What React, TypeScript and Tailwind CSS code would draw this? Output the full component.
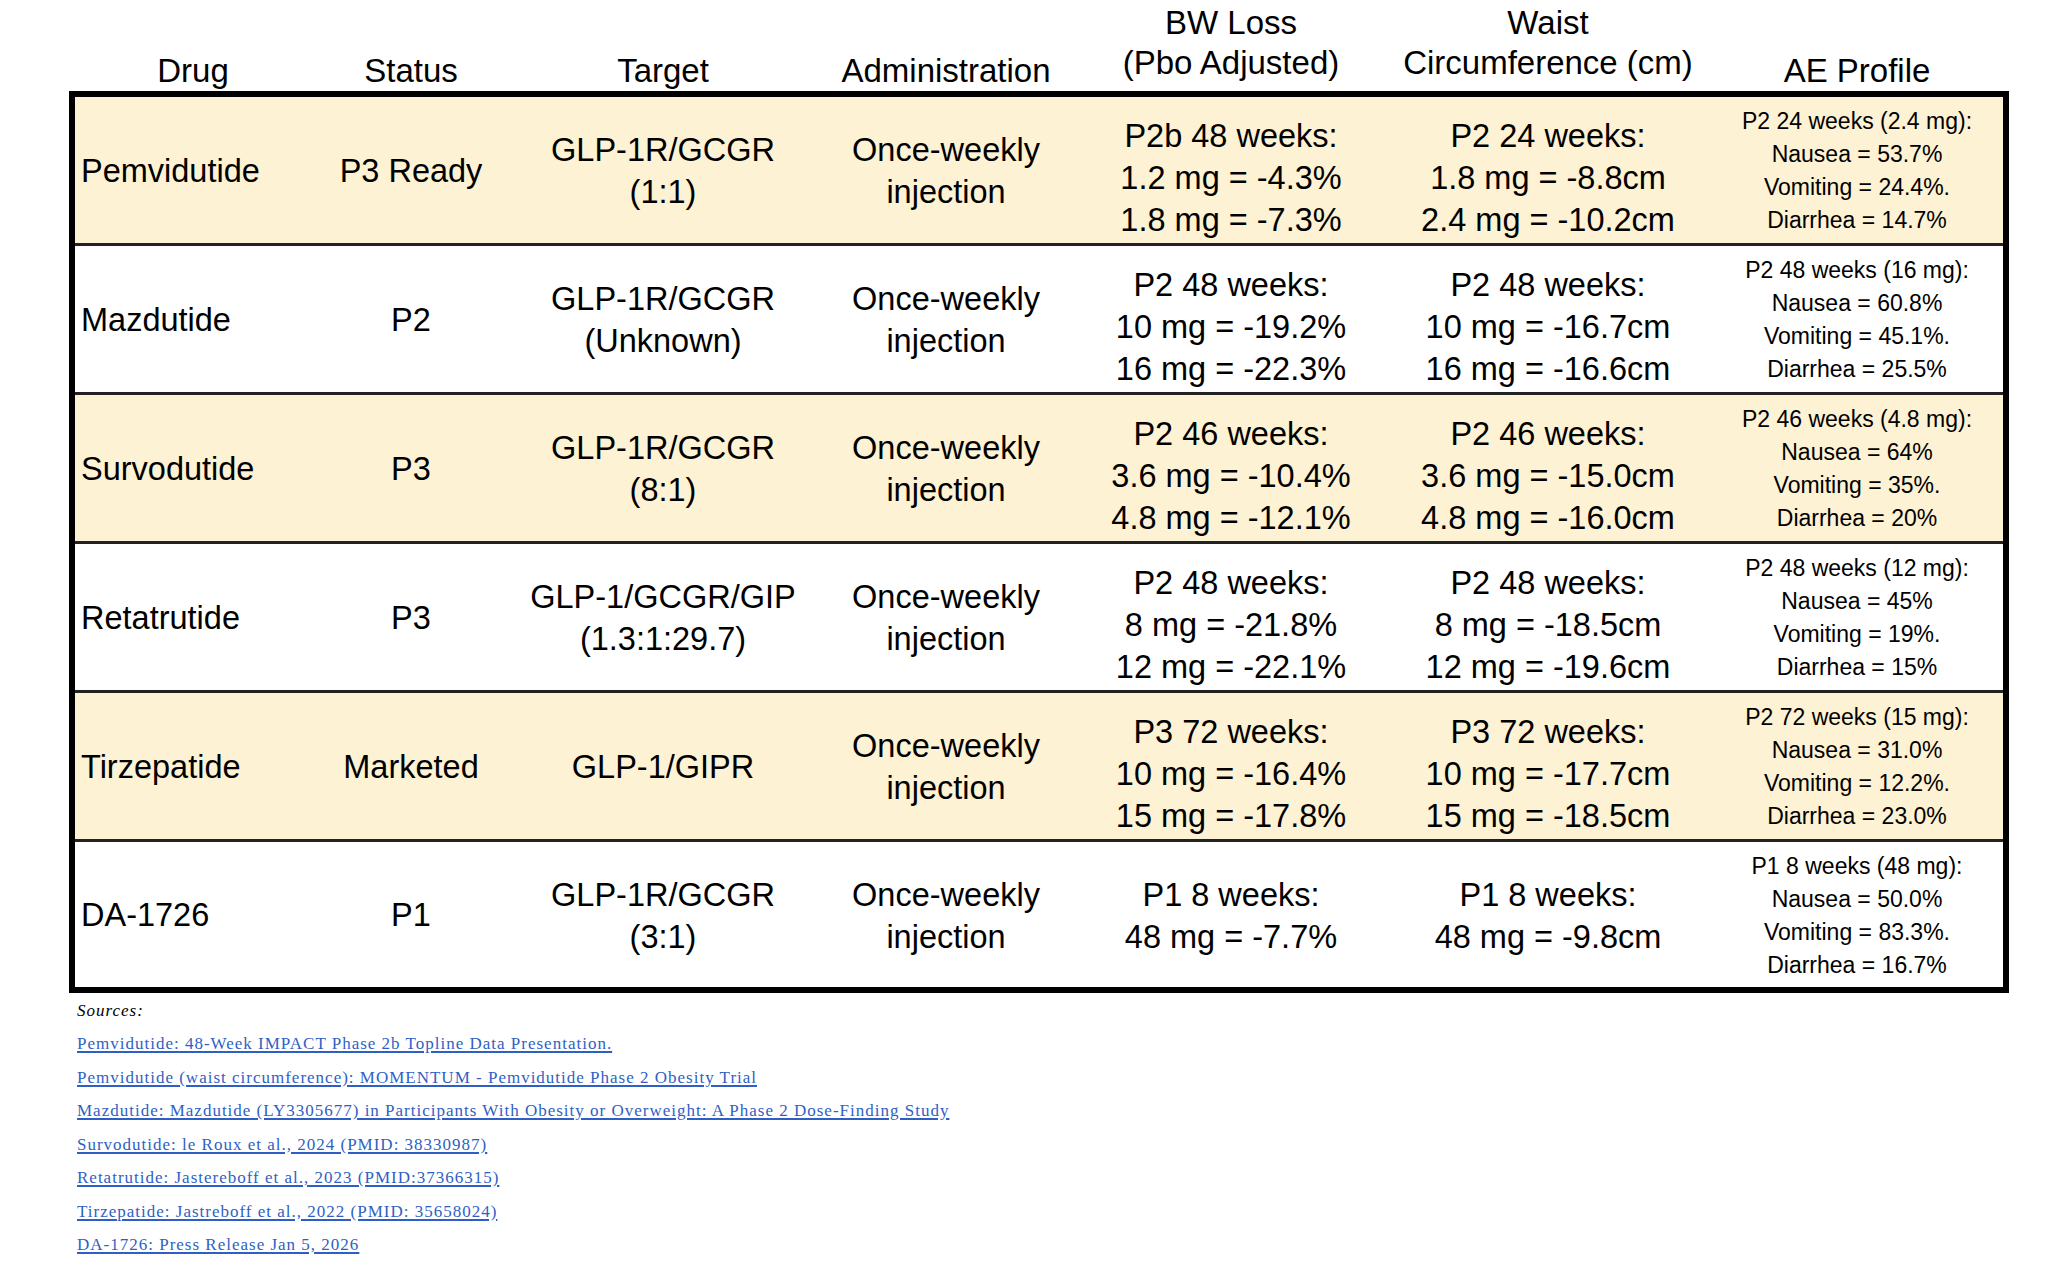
const cols = 'grid grid-cols-[236px_200px_304px_262px_308px_326px_292px]';

type Row = {
  drug: string;
  status: string;
  target: string[];
  bw: string[];
  waist: string[];
  ae: string[];
  shaded: boolean;
};

const rows: Row[] = [
  {
    drug: 'Pemvidutide',
    status: 'P3 Ready',
    target: ['GLP-1R/GCGR', '(1:1)'],
    bw: ['P2b 48 weeks:', '1.2 mg = -4.3%', '1.8 mg = -7.3%'],
    waist: ['P2 24 weeks:', '1.8 mg = -8.8cm', '2.4 mg = -10.2cm'],
    ae: ['P2 24 weeks (2.4 mg):', 'Nausea = 53.7%', 'Vomiting = 24.4%.', 'Diarrhea = 14.7%'],
    shaded: true,
  },
  {
    drug: 'Mazdutide',
    status: 'P2',
    target: ['GLP-1R/GCGR', '(Unknown)'],
    bw: ['P2 48 weeks:', '10 mg = -19.2%', '16 mg = -22.3%'],
    waist: ['P2 48 weeks:', '10 mg = -16.7cm', '16 mg = -16.6cm'],
    ae: ['P2 48 weeks (16 mg):', 'Nausea = 60.8%', 'Vomiting = 45.1%.', 'Diarrhea = 25.5%'],
    shaded: false,
  },
  {
    drug: 'Survodutide',
    status: 'P3',
    target: ['GLP-1R/GCGR', '(8:1)'],
    bw: ['P2 46 weeks:', '3.6 mg = -10.4%', '4.8 mg = -12.1%'],
    waist: ['P2 46 weeks:', '3.6 mg = -15.0cm', '4.8 mg = -16.0cm'],
    ae: ['P2 46 weeks (4.8 mg):', 'Nausea = 64%', 'Vomiting = 35%.', 'Diarrhea = 20%'],
    shaded: true,
  },
  {
    drug: 'Retatrutide',
    status: 'P3',
    target: ['GLP-1/GCGR/GIP', '(1.3:1:29.7)'],
    bw: ['P2 48 weeks:', '8 mg = -21.8%', '12 mg = -22.1%'],
    waist: ['P2 48 weeks:', '8 mg = -18.5cm', '12 mg = -19.6cm'],
    ae: ['P2 48 weeks (12 mg):', 'Nausea = 45%', 'Vomiting = 19%.', 'Diarrhea = 15%'],
    shaded: false,
  },
  {
    drug: 'Tirzepatide',
    status: 'Marketed',
    target: ['GLP-1/GIPR'],
    bw: ['P3 72 weeks:', '10 mg = -16.4%', '15 mg = -17.8%'],
    waist: ['P3 72 weeks:', '10 mg = -17.7cm', '15 mg = -18.5cm'],
    ae: ['P2 72 weeks (15 mg):', 'Nausea = 31.0%', 'Vomiting = 12.2%.', 'Diarrhea = 23.0%'],
    shaded: true,
  },
  {
    drug: 'DA-1726',
    status: 'P1',
    target: ['GLP-1R/GCGR', '(3:1)'],
    bw: ['P1 8 weeks:', '48 mg = -7.7%'],
    waist: ['P1 8 weeks:', '48 mg = -9.8cm'],
    ae: ['P1 8 weeks (48 mg):', 'Nausea = 50.0%', 'Vomiting = 83.3%.', 'Diarrhea = 16.7%'],
    shaded: false,
  },
];

const sources = [
  'Pemvidutide: 48-Week IMPACT Phase 2b Topline Data Presentation.',
  'Pemvidutide (waist circumference): MOMENTUM - Pemvidutide Phase 2 Obesity Trial',
  'Mazdutide: Mazdutide (LY3305677) in Participants With Obesity or Overweight: A Phase 2 Dose-Finding Study',
  'Survodutide: le Roux et al., 2024 (PMID: 38330987)',
  'Retatrutide: Jastereboff et al., 2023 (PMID:37366315)',
  'Tirzepatide: Jastreboff et al., 2022 (PMID: 35658024)',
  'DA-1726: Press Release Jan 5, 2026',
];

const Lines = ({ lines, extraTop }: { lines: string[]; extraTop?: boolean }) => (
  <div className={`flex flex-col items-center justify-center text-center leading-[42px] ${extraTop && lines.length === 3 ? 'pt-[14px]' : ''}`}>
    {lines.map((l) => (
      <div key={l} className="whitespace-nowrap">{l}</div>
    ))}
  </div>
);

export default function App() {
  return (
    <div className="min-h-screen bg-white pl-[69px] text-black [font-family:'Liberation_Sans',Arial,sans-serif]">
      {/* Column headings */}
      <div className={`${cols} h-[91px] items-end px-[6px] text-[33px] leading-[40px]`}>
        <div className="text-center">Drug</div>
        <div className="text-center">Status</div>
        <div className="text-center">Target</div>
        <div className="text-center">Administration</div>
        <div className="pb-[8px] text-center">
          <div>BW Loss</div>
          <div>(Pbo Adjusted)</div>
        </div>
        <div className="pb-[8px] text-center">
          <div>Waist</div>
          <div>Circumference (cm)</div>
        </div>
        <div className="text-center">AE Profile</div>
      </div>

      {/* Table */}
      <div className="w-[1940px] border-[6px] border-black text-[32.5px]">
        {rows.map((r, i) => (
          <div
            key={r.drug}
            className={`${cols} ${i < rows.length - 1 ? 'h-[149px] border-b-[3px] border-[#222]' : 'h-[145px]'} ${r.shaded ? 'bg-[#fdf2d3]' : 'bg-white'}`}
          >
            <div className="flex items-center pl-[6px] pt-[2px]">{r.drug}</div>
            <div className="flex items-center justify-center pt-[2px]">{r.status}</div>
            <div className="flex items-center justify-center pt-[2px]">
              <Lines lines={r.target} />
            </div>
            <div className="flex items-center justify-center pt-[2px]">
              <Lines lines={['Once-weekly', 'injection']} />
            </div>
            <div className="flex items-center justify-center pt-[2px]">
              <Lines lines={r.bw} extraTop />
            </div>
            <div className="flex items-center justify-center pt-[2px]">
              <Lines lines={r.waist} extraTop />
            </div>
            <div className="flex flex-col items-center justify-center pt-[2px] text-[23px] leading-[33px]">
              {r.ae.map((l) => (
                <div key={l} className="whitespace-nowrap">
                  {l}
                </div>
              ))}
            </div>
          </div>
        ))}
      </div>

      {/* Sources */}
      <div className="pl-[8px] pt-[8px] [font-family:'Liberation_Serif','Times_New_Roman',serif]">
        <div className="text-[17px] italic leading-[20px] tracking-[1px]">Sources:</div>
        <ul className="mt-[13px] flex flex-col gap-[13.5px]">
          {sources.map((s) => (
            <li key={s} className="leading-[20px]">
              <a href="#" className="text-[17px] tracking-[1px] text-[#2f5fc4] underline decoration-[1.5px] underline-offset-[2px]">
                {s}
              </a>
            </li>
          ))}
        </ul>
      </div>
    </div>
  );
}
